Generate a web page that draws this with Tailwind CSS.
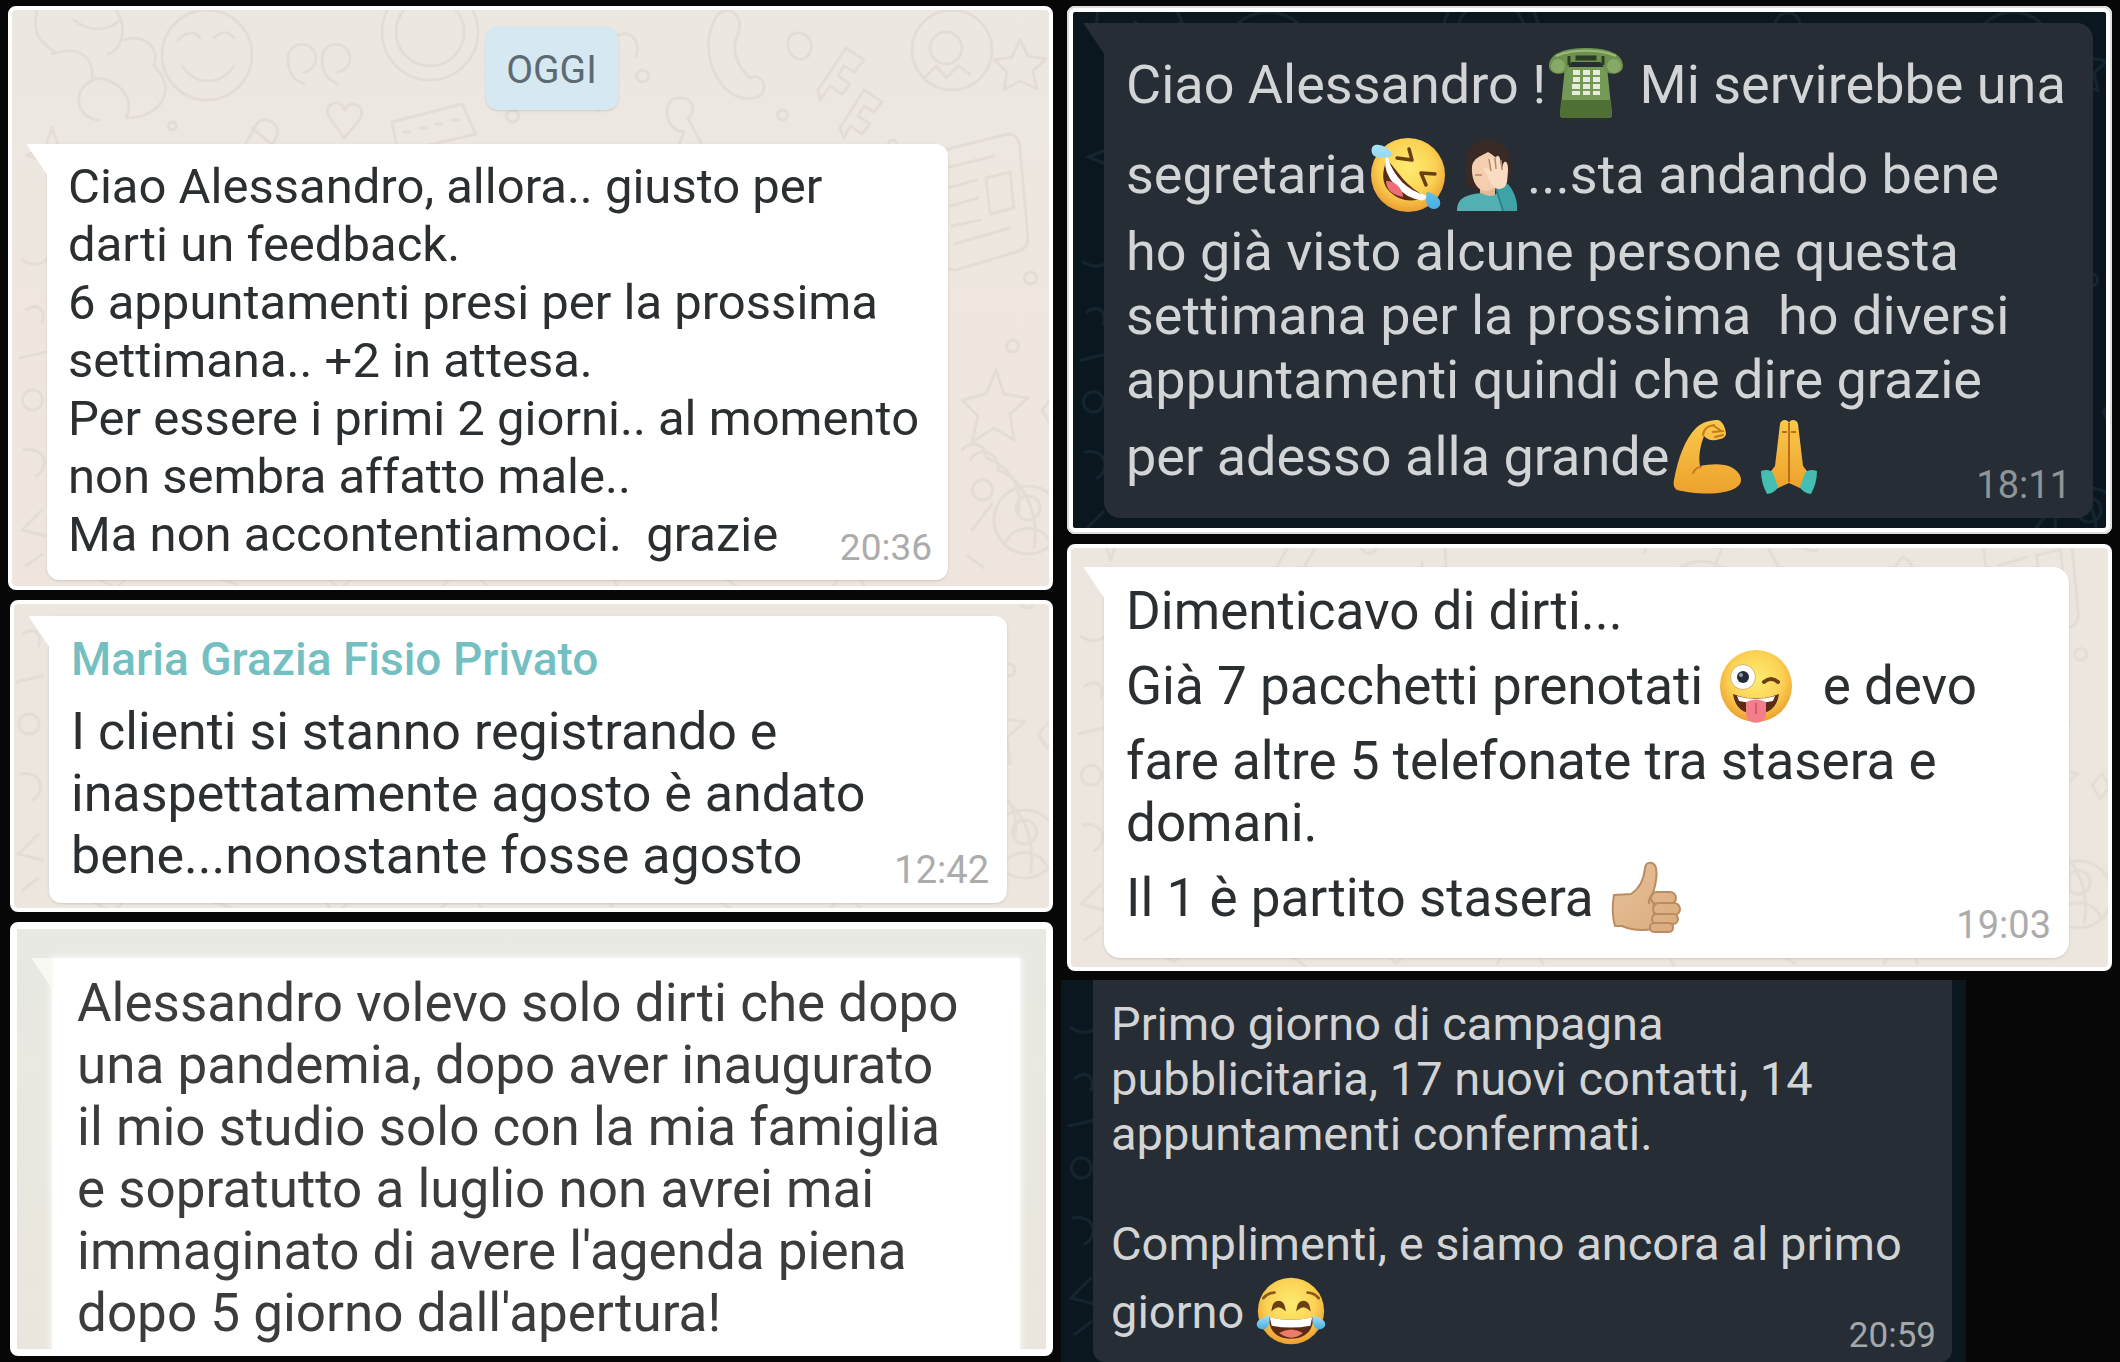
<!DOCTYPE html>
<html lang="it">
<head>
<meta charset="utf-8">
<meta name="viewport" content="width=device-width, initial-scale=1">
<title>Messaggi dei clienti</title>
<script src="https://cdn.jsdelivr.net/npm/@tailwindcss/browser@4"></script>
</head>
<body class="bg-[#070707] font-['Roboto','Liberation_Sans',sans-serif]">

<!-- Shared drawings: wallpaper doodles, bubble tail, emoji gradients -->
<svg class="absolute size-0" aria-hidden="true">
  <defs>
    <g id="doodles" fill="none" stroke-width="3" stroke-linecap="round" stroke-linejoin="round">
      <path d="M25 0c-5 22 2 32 18 42M62 10c14 12 34 12 46 0M104 0c12 18 6 40-8 44M40 44c30-10 42 6 40 24 26 0 44 20 34 40 36 0 52-30 28-52 6-20-10-32-30-26M82 70c-20 6-22 36 4 40M40 118l7 19 18 8-18 7-7 21-7-21-18-7 18-7z"/>
      <circle cx="195" cy="45" r="45"/><path d="M166 30c10-10 18-8 22-2M202 28c8-8 16-6 20 0M170 56c14 20 38 20 52 0"/>
      <path d="M206 182l40-70c12-6 24 4 18 16l-40 72-26 8zM240 118l22 18M208 184l20 14"/>
      <path d="M292 62a14 14 0 1 0-16-14c0 16 6 22 16 26M326 62a14 14 0 1 0-16-14c0 16 6 22 16 26"/>
      <circle cx="418" cy="22" r="48"/><circle cx="418" cy="22" r="34"/>
      <path d="M318 108c-10-14 12-22 14-8 6-12 26-4 14 12l-14 16zM380 112l70-18 14 30-78 18zM392 122h6M408 118h6M424 114h6M440 110h6"/>
      <path d="M344 148c20-8 34 2 34 24v20c0 16-24 16-24 0v-18M138 190l8 14 16 2-11 11 3 16-14-7-14 8 2-16-12-11 16-3zM236 218l12 16 16-8-4 20 16 10-20 4"/>
      <path d="M430 220c4-20 22-28 36-18 24-8 40 10 34 30"/>
      <circle cx="636" cy="212" r="38"/><circle cx="728" cy="212" r="28"/><path d="M636 212l36-90M648 160l70-2M672 122c-20-2-22-30-8-34 16-2 22 12 12 20l54 104M730 138l26 4-4 22-28-6"/>
      <path d="M706 4c14-10 26 4 20 20-8 14 0 34 12 44 10-6 20 8 10 18-36 16-68-44-42-82z"/>
      <path d="M778 26c14-10 28 6 18 20-12 10-26-6-18-20zM806 80l28-42 18 12-10 12-10-6-6 10 12 8-8 10-12-8-10 14zM828 118l24-38 18 12-8 10-10-6-6 10 12 8-8 10-12-8-6 12z"/>
      <circle cx="940" cy="40" r="40"/><circle cx="934" cy="38" r="16"/><path d="M912 68l12-12 10 12 12-12 12 8"/>
      <path d="M1008 30l8 16 18 3-13 12 4 18-17-8-16 9 3-18-13-12 18-3zM924 142l72-18c10 0 12 10 12 16l8 88c0 8-4 12-12 14l-60 18c-10 0-12-6-12-12l-12-90c0-10 0-14 4-16zM934 158l48-12M936 178l28-8M938 196l28-8M940 216l28-6M974 168l24-6 4 36-24 6zM942 234l56-16"/>
      <path d="M984 360l8 24 24 4-18 16 4 26-20-12-22 14 6-26-16-16 24-6zM958 450c10-16 30-6 28 10 26 10 42 44 36 78"/>
    </g>
    <g id="doodles-low" fill="none" stroke-width="3" stroke-linecap="round" stroke-linejoin="round">
      <path d="M950 440c10-12 26-4 24 8 24 8 38 30 32 56M970 470a10 10 0 1 0 1 0M1030 400l10-12 8 14-10 12zM1000 330a6 6 0 1 0 1 0M1018 262a6 6 0 1 0 1 0"/>
      <circle cx="1016" cy="510" r="34"/><circle cx="1016" cy="498" r="12"/><path d="M994 532c8-18 36-18 44 0M960 520l20-26M956 546l16 12"/>
      <path d="M10 250c14 8 24 4 30-8M14 300c12-8 20 0 16 12M8 348l26-6M20 380a10 10 0 1 0 1 0M12 440c22-4 26 18 12 26M30 500l-20 20 24 6M14 556l16-12"/>
      <path d="M80 566l24 12 20-18M180 560c20 10 40 8 56 22M310 562l18 18 18-18M430 580c8-22 38-22 46 0M560 566h40l8 16M700 560l30 20M820 580c6-20 28-20 34 0"/>
      <path d="M270 200v10M300 150a8 8 0 1 0 1 0M160 112a4 4 0 1 0 1 0M500 100a6 6 0 1 0 1 0M550 20a8 8 0 1 0 1 0M580 90l6 10M560 150c14-8 24 4 18 16M520 200c10-16 28-8 24 8M600 30c14-14 30-2 24 16M630 60a6 6 0 1 0 1 0M800 140a9 9 0 1 0 1 0M840 170c-14 6-14 40 0 44 14-4 14-38 0-44M880 190c-12 6-12 30 0 34 12-4 12-28 0-34M80 200a9 9 0 1 0 1 0M290 210a5 5 0 1 0 1 0M770 100a5 5 0 1 0 1 0M880 130a4 4 0 1 0 1 0"/>
    </g>
    <pattern id="wall-light" width="1046" height="584" patternUnits="userSpaceOnUse"><g stroke="#e4ddd5"><use href="#doodles"/><use href="#doodles-low"/></g></pattern>
    <pattern id="wall-dark" width="1046" height="584" patternUnits="userSpaceOnUse"><g stroke="#15252d"><use href="#doodles"/><use href="#doodles-low"/></g></pattern>
    <path id="tail" d="M0 0h21v32L2 4Q0 2 0 0z"/>
    <radialGradient id="face" cx=".5" cy=".4" r=".62"><stop offset="0" stop-color="#fdec72"/><stop offset=".6" stop-color="#fbd253"/><stop offset="1" stop-color="#ea9a2e"/></radialGradient>
    <linearGradient id="skin" x1="0" y1="0" x2="0" y2="1"><stop offset="0" stop-color="#fbc94c"/><stop offset="1" stop-color="#eda12b"/></linearGradient>
    <linearGradient id="tan" gradientUnits="userSpaceOnUse" x1="0" y1="0" x2="76" y2="76"><stop offset="0" stop-color="#e8c19a"/><stop offset="1" stop-color="#d9aa7c"/></linearGradient>
    <linearGradient id="tear" x1="0" y1="0" x2="0" y2="1"><stop offset="0" stop-color="#a9e2f6"/><stop offset="1" stop-color="#49afe0"/></linearGradient>
  </defs>
</svg>

<main class="grid min-h-screen grid-cols-2 items-start gap-x-3.5 px-2 pt-1.5 text-[#2c2f31]">

  <div class="flex flex-col gap-2.5">

    <section class="relative flex flex-col overflow-hidden rounded-lg border-4 border-white bg-linear-to-b from-[#ebe8e1] via-[#eee6df] to-[#ede5de] pt-[17px] pr-[101px] pb-1.5 pl-[35px]">
      <svg class="absolute inset-0 size-full" aria-hidden="true"><rect width="100%" height="100%" fill="url(#wall-light)"/></svg>
      <h2 class="relative mb-[34px] ml-[108px] flex h-[83px] w-[132px] items-center justify-center self-center rounded-xl bg-[#d6e9f3] pt-1 text-[39px] text-[#5d6a72] shadow-sm">OGGI</h2>
      <article class="relative rounded-xl rounded-tl-none bg-white px-4 pt-3.5 pb-4 pl-[21px] shadow-sm">
        <svg class="absolute top-0 -left-5 h-8 w-[21px] fill-white" aria-hidden="true"><use href="#tail"/></svg>
        <div class="flex flex-col text-[49px] leading-[58px] whitespace-pre">
          <p>Ciao Alessandro, allora.. giusto per</p>
          <p>darti un feedback.</p>
          <p>6 appuntamenti presi per la prossima</p>
          <p>settimana.. +2 in attesa.</p>
          <p>Per essere i primi 2 giorni.. al momento</p>
          <p>non sembra affatto male..</p>
          <div class="flex items-end justify-between"><p>Ma non accontentiamoci.  grazie</p><time class="text-[37px] leading-8 text-[#acacac]">20:36</time></div>
        </div>
      </article>
    </section>

    <section class="relative ml-0.5 overflow-hidden rounded-lg border-4 border-white bg-[#ede6df] pt-3 pr-[42px] pb-[5px] pl-[35px]">
      <svg class="absolute inset-0 size-full" viewBox="0 270 1046 304" preserveAspectRatio="xMidYMid slice" aria-hidden="true"><rect width="1046" height="584" fill="url(#wall-light)"/></svg>
      <article class="relative rounded-xl rounded-tl-none bg-white pt-3 pr-[18px] pb-4 pl-[22px] shadow-sm">
        <svg class="absolute top-0 -left-5 h-8 w-[21px] fill-white" aria-hidden="true"><use href="#tail"/></svg>
        <h2 class="mb-[11px] text-[46px] leading-[62px] font-medium text-[#74bfc1]">Maria Grazia Fisio Privato</h2>
        <div class="flex flex-col text-[52px] leading-[62px] whitespace-pre">
          <p>I clienti si stanno registrando e</p>
          <p>inaspettatamente agosto è andato</p>
          <div class="flex items-end justify-between"><p>bene...nonostante fosse agosto</p><time class="text-[38px] leading-[34px] text-[#acacac]">12:42</time></div>
        </div>
      </article>
    </section>

    <section class="ml-0.5 overflow-hidden rounded-lg border-7 border-white bg-linear-to-b from-[#e8e9e3] to-[#ebe6dd] pt-[29px] pr-[26px] pl-[35px]">
      <article class="relative bg-white pt-3.5 pb-[5px] pl-[25px] text-[#3b3c3d] shadow-[0_0_6px_2px_rgba(255,255,255,0.7)]">
        <svg class="absolute top-0 -left-5 h-8 w-[21px] fill-[#f8f8f4]" aria-hidden="true"><use href="#tail"/></svg>
        <div class="flex flex-col text-[53px] leading-[62px] whitespace-pre">
          <p>Alessandro volevo solo dirti che dopo</p>
          <p>una pandemia, dopo aver inaugurato</p>
          <p>il mio studio solo con la mia famiglia</p>
          <p>e sopratutto a luglio non avrei mai</p>
          <p>immaginato di avere l'agenda piena</p>
          <p>dopo 5 giorno dall'apertura!</p>
        </div>
      </article>
    </section>
  </div>

  <div class="flex flex-col">

    <section class="relative mb-2.5 overflow-hidden rounded-lg border-6 border-white bg-[#0a171e] pt-[11px] pr-[13px] pb-2.5 pl-[31px] outline-2 -outline-offset-2 outline-[#dedede]">
      <svg class="absolute inset-0 size-full" aria-hidden="true"><rect width="100%" height="100%" fill="url(#wall-dark)"/></svg>
      <article class="relative rounded-2xl rounded-tl-none bg-[#262d34] pt-[17px] pr-[22px] pb-4 pl-[22px] text-[#d2d4d6]">
        <svg class="absolute top-0 -left-5 h-8 w-[21px] fill-[#262d34]" aria-hidden="true"><use href="#tail"/></svg>
        <div class="flex flex-col text-[54px] leading-[64px] whitespace-pre">
          <p class="flex h-[90px] items-center"><span>Ciao Alessandro !</span><svg role="img" aria-label="telefono" class="mx-0.5 size-[76px] shrink-0" viewBox="0 0 76 76">
              <path d="M16 68h8v5h-8zM52 68h8v5h-8z" fill="#26331e"/>
              <path d="M17 20h42l5 48q0 3-4 3H16q-4 0-4-3z" fill="#759a55"/>
              <path d="M13 53h50l1 15q0 3-4 3H16q-4 0-4-3z" fill="#4f7035"/>
              <path d="M1 19C1 6 18 1 38 1s37 5 37 18c0 9-15 10-18 4-2-4-3-7-5-8H24c-2 1-3 4-5 8-3 6-18 5-18-4z" fill="#6d914e"/>
              <path d="M8 9c16-7 44-7 60 0" fill="none" stroke="#9aba7a" stroke-width="2"/>
              <path d="M21 9v9M55 9v9M29 10h18v2H29z" fill="none" stroke="#2d3d25" stroke-width="3"/>
              <circle cx="10" cy="19" r="7" fill="#86a968"/><circle cx="66" cy="19" r="7" fill="#86a968"/>
              <path d="M25 23h7v5h-7zM35 23h7v5h-7zM45 23h7v5h-7zM25 30h7v5h-7zM35 30h7v5h-7zM45 30h7v5h-7zM24 37h8v5h-8zM35 37h7v5h-7zM45 37h7v5h-7zM24 44h8v4h-8zM35 44h7v4h-7zM45 44h7v4h-7z" fill="#e8ecdf"/>
            </svg><span> Mi servirebbe una</span></p>
          <p class="flex h-[90px] items-center"><span>segretaria</span><svg role="img" aria-label="rotolarsi dal ridere" class="mx-0.5 size-[76px] shrink-0" viewBox="0 0 76 76">
              <circle cx="39" cy="38" r="37" fill="url(#face)"/>
              <path d="M18 22Q9 44 21 55q15 14 36 5Q43 52 34 42z" fill="#5c2b14"/>
              <path d="M18 22q3 12 14 24 10 10 25 14l-4 2Q38 60 27 47 16 35 18 22z" fill="#fff" stroke="#fff" stroke-width="3" stroke-linejoin="round"/>
              <path d="M17 44q7-1 13 6 4 5 4 10-10-2-14-7-3-4-3-9z" fill="#ee6d76"/>
              <path d="M28 21l15 2-3-11M66 37l-14-1 5 12" fill="none" stroke="#6b3f14" stroke-width="3.500" stroke-linecap="round" stroke-linejoin="round"/>
              <path d="M24 18C17 22 5 22 3 16 1 9 6 7 10 8c8 1 11 6 14 10zM58 55c7 1 15 7 13 13-2 5-9 5-12 1-3-5-2-9-1-14z" fill="url(#tear)"/>
            </svg><svg role="img" aria-label="donna con la mano sul viso" class="mx-0.5 size-[76px] shrink-0" viewBox="0 0 76 76">
              <path d="M38 3C23 3 16 15 17 30c-2 12 0 19 9 24l30-4c6-10 8-18 6-27C60 10 51 3 38 3z" fill="#3a2a25"/>
              <path d="M31 44h15v18H31z" fill="#e3b995"/>
              <path d="M23 29c2-8 7-9 16-14 8 5 14 9 13 19-1 12-7 20-15 20-9 0-15-11-14-25z" fill="#f3cfb0"/>
              <path d="M8 74c0-13 8-16 24-18 8 4 12 4 16 0l9 18z" fill="#52b0b2"/>
              <path d="M47 51l12-4c6 7 10 17 9 27H54z" fill="#3fa2a6"/>
              <path d="M47 51l7 23" stroke="#2d8387" stroke-width="2"/>
              <path d="M34 31c4-1 6 1 8 4-2-9-3-14-1-15 3 0 4 5 6 11-1-8 0-13 2-12 3 1 2 7 4 13 1-6 2-8 4-7 3 2 2 11 1 20-1 5-4 7-9 7-7-1-9-11-15-21z" fill="#f9dcc1"/>
              <path d="M42 34l-2-12M47 32l-1-11M53 33l-1-10M26 38h7" fill="none" stroke="#bb8766" stroke-width="1.500"/>
            </svg><span>...sta andando bene</span></p>
          <p>ho già visto alcune persone questa</p>
          <p>settimana per la prossima  ho diversi</p>
          <p>appuntamenti quindi che dire grazie</p>
          <div class="flex h-[90px] items-end justify-between">
            <p class="flex h-full items-center"><span>per adesso alla grande</span><svg role="img" aria-label="bicipite" class="mx-0.5 size-[76px] shrink-0" viewBox="0 0 76 76">
              <path d="M3 61C7 39 14 20 25 9c6-6 15-8 22-8 4 1 7 6 8 13 0 4-3 6-10 7-6 1-9-1-12-4-3 8-6 19-4 30 10-2 23-3 31 1 7 4 10 8 10 13 0 6-7 10-17 12-15 3-35 1-47-2-3-2-4-5-3-10z" fill="url(#skin)"/>
              <path d="M22 54c2-4 5-6 8-6M32 16c1-7 5-9 11-10M43 7l6 4M42 13l10-1M44 18l8-2" fill="none" stroke="#c47a1c" stroke-width="2" stroke-linecap="round"/>
            </svg><svg role="img" aria-label="mani giunte" class="mx-0.5 size-[76px] shrink-0" viewBox="0 0 76 76">
              <path d="M29 5c1-5 8-5 9-1 1-4 8-4 9 1l5 42 7 9-8 14-13-6-13 6-8-14 7-9z" fill="url(#skin)"/>
              <path d="M38 4v59M31 13h5M40 13h5" stroke="#b96f1a" stroke-width="2" fill="none"/>
              <path d="M10 52q8-3 12 2l5 14q-3 6-11 7Q10 64 10 52zM66 52q-8-3-12 2l-5 14q3 6 11 7 6-11 6-23z" fill="#43beb0"/>
            </svg></p>
            <time class="text-[38px] leading-[34px] text-[#8f9498]">18:11</time>
          </div>
        </div>
      </article>
    </section>

    <section class="relative mb-[9px] overflow-hidden rounded-lg border-4 border-white bg-[#ede6df] pt-[19px] pr-[39px] pb-[9px] pl-[33px]">
      <svg class="absolute inset-0 size-full" viewBox="0 160 1046 424" preserveAspectRatio="xMidYMid slice" aria-hidden="true"><rect width="1046" height="584" fill="url(#wall-light)"/></svg>
      <article class="relative rounded-2xl rounded-tl-none bg-white pt-[13px] pr-[18px] pb-4 pl-[22px] shadow-sm">
        <svg class="absolute top-0 -left-5 h-8 w-[21px] fill-white" aria-hidden="true"><use href="#tail"/></svg>
        <div class="flex flex-col text-[53px] leading-[62px] whitespace-pre">
          <p>Dimenticavo di dirti...</p>
          <p class="flex h-[88px] items-center"><span>Già 7 pacchetti prenotati </span><svg role="img" aria-label="occhiolino con la lingua fuori" class="mx-0.5 size-[76px] shrink-0" viewBox="0 0 76 76">
              <circle cx="38" cy="38" r="36" fill="url(#face)"/>
              <circle cx="25" cy="29" r="12.500" fill="#fff" stroke="#d9b46c" stroke-width="1"/><circle cx="25" cy="29" r="6" fill="#252b37"/><circle cx="23" cy="27" r="2" fill="#8fa0b5"/>
              <path d="M46 34q7-6 14 0" fill="none" stroke="#6b3f14" stroke-width="4" stroke-linecap="round"/>
              <path d="M15 46q23 9 46 0-3 20-23 20T15 46z" fill="#5c2b14"/>
              <path d="M19 48q19 6 38 0l-2 5q-17 4-34 0z" fill="#fff"/>
              <path d="M28 54q10-5 20 0v11c0 13-20 13-20 0z" fill="#f37d8c"/><path d="M38 55v11" stroke="#d25b6c" stroke-width="2"/>
            </svg><span>  e devo</span></p>
          <p>fare altre 5 telefonate tra stasera e</p>
          <p>domani.</p>
          <div class="flex h-[88px] items-end justify-between">
            <p class="flex h-full items-center"><span>Il 1 è partito stasera </span><svg role="img" aria-label="pollice in su" class="mx-0.5 size-[76px] shrink-0" viewBox="0 0 76 76">
              <g fill="url(#tan)" stroke="#bb8c61" stroke-width="2" stroke-linejoin="round">
                <path d="M5 35l17-1C31 28 35 20 36 8c1-7 9-7 11 0 2 10-1 18-3 25l2 36q-20 3-33-3H6q-4-14-1-31z"/>
                <rect x="42" y="32" width="25" height="12" rx="6"/><rect x="44" y="43" width="27" height="12" rx="6"/><rect x="43" y="54" width="26" height="10" rx="5"/><rect x="41" y="63" width="23" height="9" rx="4"/>
              </g>
              <path d="M43 34c-2 4-4 6-3 10" fill="none" stroke="#bb8c61" stroke-width="2"/>
            </svg></p>
            <time class="text-[38px] leading-[34px] text-[#acacac]">19:03</time>
          </div>
        </div>
      </article>
    </section>

    <section class="relative mr-[146px] -ml-1.5 overflow-hidden bg-[#0a171e] pr-3.5 pl-8">
      <svg class="absolute inset-0 size-full" viewBox="0 202 905 382" preserveAspectRatio="xMidYMid slice" aria-hidden="true"><rect width="1046" height="584" fill="url(#wall-dark)"/></svg>
      <article class="relative rounded-b-xl bg-[#262d34] pt-4 pr-4 pb-[11px] pl-[18px] text-[#d2d4d6]">
        <div class="flex flex-col text-[47px] leading-[55px] whitespace-pre">
          <p>Primo giorno di campagna</p>
          <p>pubblicitaria, 17 nuovi contatti, 14</p>
          <p class="mb-[55px]">appuntamenti confermati.</p>
          <p>Complimenti, e siamo ancora al primo</p>
          <div class="flex h-20 items-end justify-between">
            <p class="flex h-full items-center"><span>giorno </span><svg role="img" aria-label="lacrime di gioia" class="size-[70px] shrink-0" viewBox="0 0 76 76">
              <circle cx="38" cy="38" r="36" fill="url(#face)"/>
              <path d="M8 24q5-6 12-6M68 24q-5-6-12-6" fill="none" stroke="#8a5a1c" stroke-width="3" stroke-linecap="round"/>
              <path d="M18 36c1-11 12-11 13 0-4-4-9-4-13 0zM45 36c1-11 12-11 13 0-4-4-9-4-13 0z" fill="#6b3f14" stroke="#6b3f14" stroke-width="2"/>
              <path d="M14 45q24 5 48 0c0 16-10 23-24 23S14 61 14 45z" fill="#5c2b14"/>
              <path d="M15 45q23 5 46 0l-2 9q-21 4-42 0z" fill="#fff"/>
              <path d="M25 62q13-8 26 0-12 10-26 0z" fill="#ee7a6c"/>
              <path d="M14 42c2 7 0 15-6 16-6 0-9-5-6-9 2-3 8-4 12-7zM62 42c-2 7 0 15 6 16 6 0 9-5 6-9-2-3-8-4-12-7z" fill="url(#tear)"/>
            </svg></p>
            <time class="text-[35px] leading-[30px] text-[#a4a8ab]">20:59</time>
          </div>
        </div>
      </article>
    </section>
  </div>
</main>
</body>
</html>
